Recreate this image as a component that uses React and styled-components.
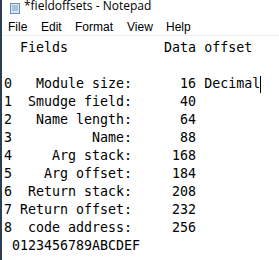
import React from 'react';
import styled, { createGlobalStyle } from 'styled-components';

const GlobalStyle = createGlobalStyle`
  html, body {
    margin: 0;
    padding: 0;
    background: #ffffff;
  }
`;

const Window = styled.div`
  width: 279px;
  height: 260px;
  overflow: hidden;
  background: #ffffff;
  border-left: 2px solid #2f3d4f;
  box-sizing: border-box;
  display: flex;
  flex-direction: column;
`;

const TitleBar = styled.div`
  height: 14px;
  flex-shrink: 0;
  display: flex;
  align-items: flex-end;
  padding-left: 8px;
  gap: 4px;
  overflow: hidden;
`;

const TitleText = styled.span`
  font-family: "Open Sans", "Liberation Sans", sans-serif;
  font-size: 12px;
  line-height: 13px;
  color: #000000;
  margin-bottom: 2px;
`;

const MenuBar = styled.div`
  height: 22px;
  flex-shrink: 0;
  box-sizing: border-box;
  display: flex;
  align-items: center;
  padding: 4px 0 0 6px;
  border-bottom: 1px solid #f0f0f0;
`;

const MenuItem = styled.span`
  font-family: "Liberation Sans", "Open Sans", sans-serif;
  font-size: 12px;
  color: #000000;
  width: ${(p) => p.w}px;
`;

const Editor = styled.pre`
  margin: 0;
  padding: 3px 0 0 2px;
  font-family: "DejaVu Sans Mono", "Liberation Mono", monospace;
  font-size: 13.3px;
  line-height: 18px;
  color: #000000;
  white-space: pre;
`;

const Line = styled.div`
  height: 18px;
`;

const Caret = styled.span`
  display: inline-block;
  width: 1px;
  height: 17px;
  background: #000000;
  vertical-align: middle;
`;

const NotepadIcon = () => (
  <svg width="10" height="11" viewBox="0 0 10 11">
    <rect x="0.5" y="0.5" width="9" height="10" fill="#d6e9f8" stroke="#6c8fb0" />
    <line x1="2" y1="3" x2="8" y2="3" stroke="#7a9bbb" />
    <line x1="2" y1="5" x2="8" y2="5" stroke="#7a9bbb" />
    <line x1="2" y1="7" x2="8" y2="7" stroke="#7a9bbb" />
  </svg>
);

const menus = [
  { label: 'File', w: 33 },
  { label: 'Edit', w: 34 },
  { label: 'Format', w: 52 },
  { label: 'View', w: 39 },
  { label: 'Help', w: 40 },
];

const lines = [
  '  Fields            Data offset',
  '',
  '0   Module size:      16 Decimal',
  '1  Smudge field:      40',
  '2   Name length:      64',
  '3          Name:      88',
  '4     Arg stack:     168',
  '5    Arg offset:     184',
  '6  Return stack:     208',
  '7 Return offset:     232',
  '8  code address:     256',
  ' 0123456789ABCDEF',
];

const App = () => (
  <>
    <GlobalStyle />
    <Window>
      <TitleBar>
        <NotepadIcon />
        <TitleText>*fieldoffsets - Notepad</TitleText>
      </TitleBar>
      <MenuBar>
        {menus.map((m) => (
          <MenuItem key={m.label} w={m.w}>{m.label}</MenuItem>
        ))}
      </MenuBar>
      <Editor>
        {lines.map((l, i) => (
          <Line key={i}>
            {l}
            {i === 2 && <Caret />}
          </Line>
        ))}
      </Editor>
    </Window>
  </>
);

export default App;
